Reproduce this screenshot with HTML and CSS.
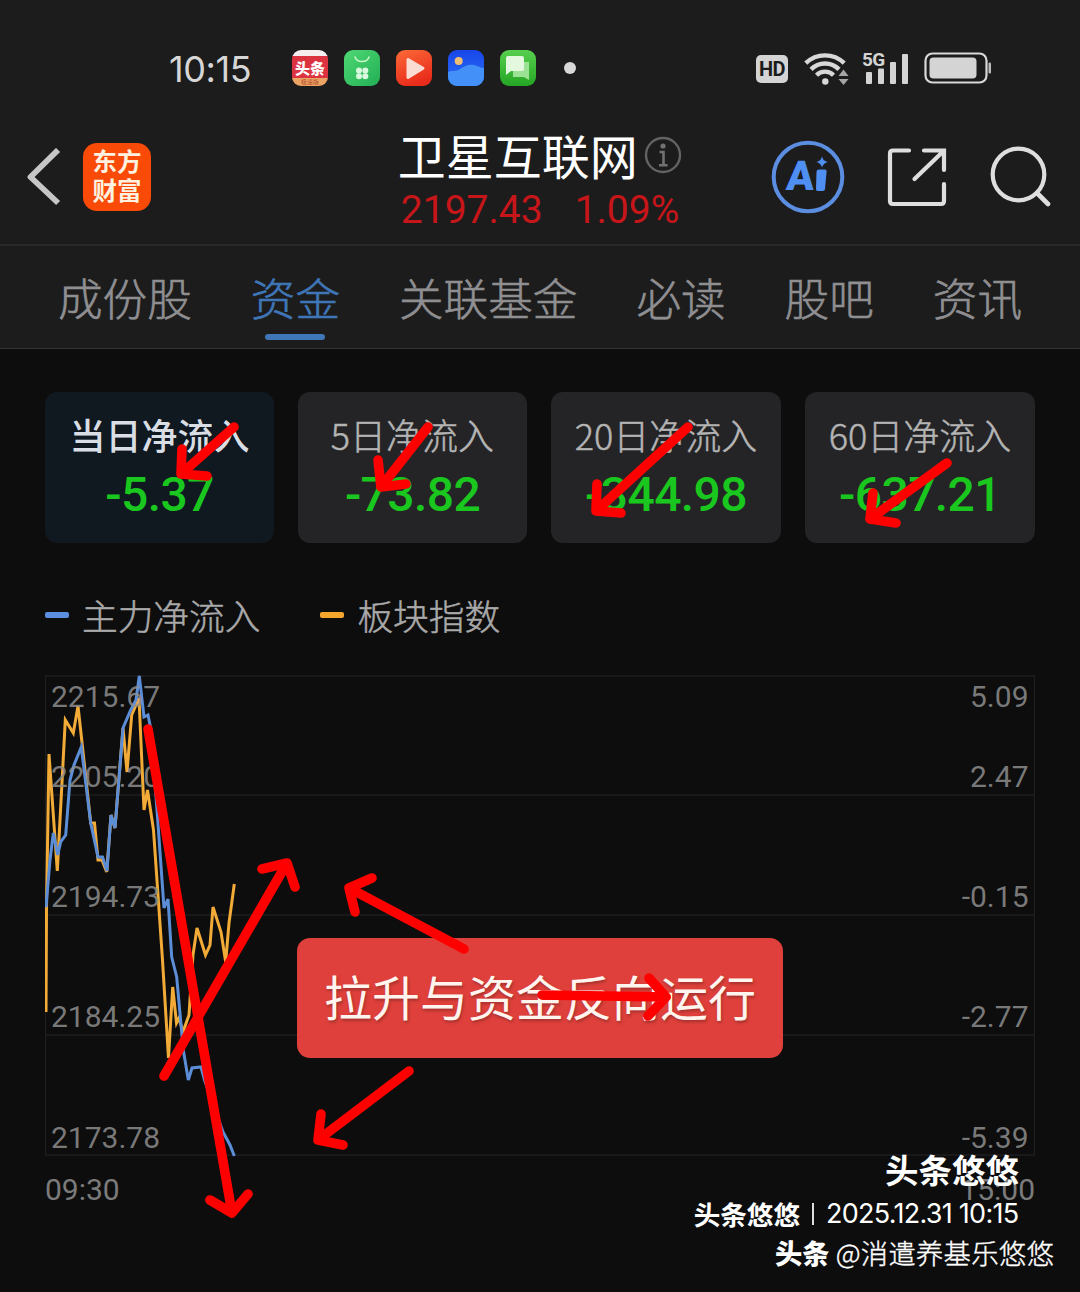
FILE: index.html
```html
<!DOCTYPE html>
<html lang="zh-CN">
<head>
<meta charset="utf-8">
<title>卫星互联网</title>
<link rel="stylesheet" href="styles.css">
</head>
<body>
<div class="screen">
  <div class="status">
    <span class="clock">10:15</span>
    <div class="apps">
      <div class="app news"><span class="news-name">头条</span><span class="news-tag">极速版</span></div>
      <svg class="app" viewBox="0 0 36 36"><defs><linearGradient id="g1" x2="1" y2="1"><stop stop-color="#4fd873"/><stop offset="1" stop-color="#22ae55"/></linearGradient></defs><rect width="36" height="36" rx="9" fill="url(#g1)"/><path d="M11 7a7.2 6 0 0 0 14 0" fill="none" stroke="#c9f8c9" stroke-width="1.5" stroke-linecap="round"/><g fill="#d9f9df"><circle cx="15" cy="20.5" r="3"/><circle cx="21.3" cy="20.5" r="3"/><circle cx="15" cy="26.3" r="3"/><circle cx="21.3" cy="26.3" r="3"/></g></svg>
      <svg class="app" viewBox="0 0 36 36"><defs><linearGradient id="g2" x2=".4" y2="1"><stop stop-color="#fb6a38"/><stop offset="1" stop-color="#e92c1b"/></linearGradient></defs><rect width="36" height="36" rx="9" fill="url(#g2)"/><path d="M12 9.500l15 8.700-15 9.300z" fill="#fbdcd3" stroke="#fbdcd3" stroke-width="3" stroke-linejoin="round"/></svg>
      <svg class="app" viewBox="0 0 36 36"><defs><linearGradient id="g3" x2="0" y2="1"><stop stop-color="#1846ea"/><stop offset="1" stop-color="#2d72f5"/></linearGradient></defs><rect width="36" height="36" rx="9" fill="url(#g3)"/><path d="M0 22c5-2 7 0 12-3s8-5 14-4c5 1 6 3 10 3v9a9 9 0 0 1-9 9H9a9 9 0 0 1-9-9z" fill="#4391f8"/><circle cx="10.700" cy="11" r="4" fill="#f0bd74"/></svg>
      <svg class="app" viewBox="0 0 36 36"><defs><linearGradient id="g4" x2="0" y2="1"><stop stop-color="#58cf4e"/><stop offset="1" stop-color="#25a524"/></linearGradient></defs><rect width="36" height="36" rx="9" fill="url(#g4)"/><path d="M13 12h16v18l-5-3H13z" fill="#9be294"/><path d="M8 6h14q2 0 2 2v11q0 2-2 2H11l-5 4V8q0-2 2-2z" fill="#e3f8df"/></svg>
    </div>
    <i class="dot"></i>
    <div class="signals">
      <span class="hd">HD</span>
      <svg class="wifi" width="46" height="36" viewBox="0 0 46 36"><g fill="none" stroke="#d8d8d8" stroke-width="4.400"><path d="M1.800 13.200a27.500 27.500 0 0 1 38.400 0"/><path d="M7 19.400a19.500 19.500 0 0 1 28 0"/><path d="M12.500 25.200a12 12 0 0 1 17 0"/></g><circle cx="21.300" cy="31.500" r="3.200" fill="#d8d8d8"/><path d="M34.500 26l5-6.500 5 6.500zM34.500 29h10l-5 6z" fill="#a5a5a5"/></svg>
      <div class="cell">
        <span class="five-g">5G</span>
        <svg width="48" height="36" viewBox="0 0 48 36"><g fill="#d4d4d4"><rect x="4" y="22" width="6" height="12" rx="1"/><rect x="16" y="18.500" width="6" height="15.500" rx="1"/><rect x="28" y="12" width="6" height="22" rx="1"/><rect x="40" y="4" width="6" height="30" rx="1"/></g></svg>
      </div>
      <svg class="battery" width="68" height="32" viewBox="0 0 68 32"><rect x="1.500" y="1.500" width="61" height="29" rx="7" fill="none" stroke="#d8d8d8" stroke-width="2.200"/><rect x="5.500" y="5.500" width="47" height="21" rx="4" fill="#d4d4d4"/><rect x="64.500" y="10.500" width="2.500" height="11" rx="1" fill="#bbb"/></svg>
    </div>
  </div>

  <header class="header">
    <svg class="back" width="34" height="58" viewBox="0 0 34 58"><path d="M29 4L3.500 29 29 53" fill="none" stroke="#c6c6c6" stroke-width="5.800" stroke-linecap="square" stroke-linejoin="round"/></svg>
    <div class="brand"><span>东方</span><span>财富</span></div>
    <div class="heading">
      <div class="title-row"><h1>卫星互联网</h1>
        <svg width="38" height="38" viewBox="0 0 38 38"><circle cx="19" cy="19" r="17" fill="none" stroke="#636363" stroke-width="2.400"/><circle cx="19" cy="10" r="2.600" fill="#717171"/><path d="M15.500 16h4v13M15 29.200h8.500" fill="none" stroke="#717171" stroke-width="2.600"/></svg>
      </div>
      <div class="quote"><span>2197.43</span><span>1.09%</span></div>
    </div>
    <div class="tools">
      <svg width="74" height="74" viewBox="0 0 74 74"><circle cx="37" cy="37" r="34.300" fill="none" stroke="#5b8ee0" stroke-width="4"/><text x="18" y="50.500" class="ai-mark" transform="skewX(-4)">A</text><path d="M45.500 31.500q.3-2 2.300-2h6q2 0 1.800 2L54 49q-.2 2-2.200 2h-5q-2 0-1.800-2zM51 16.500q1.200 4.500 5.800 5.500-4.600 1.200-5.800 5.500-1.200-4.300-5.500-5.500 4.300-1 5.500-5.500z" fill="#4f8ff2"/></svg>
      <svg width="60" height="60" viewBox="0 0 60 60"><path d="M22 3.500H6q-3 0-3 3V54q0 3 3 3h48q3 0 3-3V37M37 3.500h20V23M55 5.500L27.500 32" fill="none" stroke="#dedede" stroke-width="4.200" stroke-linecap="round"/></svg>
      <svg width="62" height="62" viewBox="0 0 62 62"><circle cx="29.500" cy="28.500" r="25.800" fill="none" stroke="#dedede" stroke-width="4.200"/><path d="M48 47l11 11" stroke="#dedede" stroke-width="4.600" stroke-linecap="round"/></svg>
    </div>
  </header>

  <nav class="tabs">
    <span>成份股</span><span class="on">资金</span><span>关联基金</span><span>必读</span><span>股吧</span><span>资讯</span>
  </nav>

  <main class="content">
    <section class="cards">
      <div class="card on"><span class="label">当日净流入</span><span class="value">-5.37</span></div>
      <div class="card"><span class="label">5日净流入</span><span class="value">-73.82</span></div>
      <div class="card"><span class="label">20日净流入</span><span class="value">-344.98</span></div>
      <div class="card"><span class="label">60日净流入</span><span class="value">-637.21</span></div>
    </section>
    <div class="legend">
      <span class="key"><i class="flow"></i>主力净流入</span>
      <span class="key"><i class="index"></i>板块指数</span>
    </div>
    <svg class="chart" width="990" height="484" viewBox="45 674 990 484">
      <path d="M45.500 676H1034.500V1155H45.500zM45 795H1035M45 915H1035M45 1035H1035" fill="none" stroke="#1e1e20" stroke-width="1.500"/>
      <path d="M46 1012L46.500 907 49 754 57.300 871 65.300 720 73.300 733 78 706 82.600 748 90.700 823 94.500 823 98 860 102 860 106.700 872 111 815 115 828 123 728 127 772 131.700 715 139 698 144 810 147.500 790 153.500 830 162.500 960 168.500 1058 172.700 987 176.500 1023 179 1018 183 1032 189 1015 193 955 197 928 205.500 955 210 945 213 907 221 932 225.700 962 229 923 234.300 884" fill="none" stroke="#f3ab38" stroke-width="3"/>
      <path d="M46 907L50 860 53.300 833 57.700 855 60.700 842 65.700 835 70 780 74 765 81.300 747 90.700 823 98 857 102.500 857 107 871 111 815 115 828 123 728 130.700 710 136 700 139.300 676 144 717 148 715 151 730 157 810 164 908 168 899 171.700 957 176.700 977 183.300 1050 188.300 1080 192 1068 201 1067 204.500 1080 223 1132 230 1145 234.300 1156" fill="none" stroke="#5c8ed8" stroke-width="3"/>
      <g class="axis">
        <text x="51" y="706.500">2215.67</text><text x="51" y="786.500">2205.20</text><text x="51" y="907">2194.73</text><text x="51" y="1027">2184.25</text><text x="51" y="1147.500">2173.78</text>
      </g>
      <g class="axis end">
        <text x="1028.500" y="706.500">5.09</text><text x="1028.500" y="786.500">2.47</text><text x="1028.500" y="907">-0.15</text><text x="1028.500" y="1027">-2.77</text><text x="1028.500" y="1147.500">-5.39</text>
      </g>
    </svg>
    <div class="times"><span>09:30</span><span>15:00</span></div>
  </main>

  <div class="note">拉升与资金反向运行</div>

  <svg class="arrows" width="1080" height="1292" viewBox="0 0 1080 1292">
    <path d="M234 427L181 474M182 449L181 474 207 476"/>
    <path d="M428 427L381 487M378 460L381 487 406 484"/>
    <path d="M688 427L596 511M597 484L596 511 621 513"/>
    <path d="M947 463L870 519M873 493L870 519 896 523"/>
    <path d="M148 729L232 1213M210 1200L232 1213 248 1194"/>
    <path d="M164 1076L287 863M262 869L287 863 295 887"/>
    <path d="M464 949L349 888M372 878L349 888 355 912"/>
    <path d="M409 1071L318 1140M321 1114L318 1140 343 1145"/>
    <path d="M542 995L666 997M649 978L666 997 648 1016"/>
  </svg>

  <div class="marks">
    <div class="mark-name">头条悠悠</div>
    <div class="mark-date"><b>头条悠悠</b><i></i><span>2025.12.31 10:15</span></div>
    <div class="mark-author"><b>头条</b><span>@消遣养基乐悠悠</span></div>
  </div>
</div>
</body>
</html>
```
FILE: styles.css
```css
* { box-sizing: border-box; }
body { margin: 0; background: #0d0d0d; font-family: "Noto Sans CJK SC", sans-serif; }
h1 { margin: 0; font-weight: 400; }
svg { display: block; flex: none; }
.screen { position: relative; width: 1080px; height: 1292px; overflow: hidden; background: #0d0d0d; }

.status { display: flex; align-items: center; height: 116px; padding: 20px 88px 0 169px; background: #1c1c1c; }
.clock { width: 123px; padding-top: 1px; color: #d6d6d6; font: 400 36px/36px Inter, sans-serif; letter-spacing: -.4px; white-space: nowrap; }
.apps { display: flex; gap: 16px; }
.app { width: 36px; height: 36px; }
.news { display: flex; flex-direction: column; align-items: center; justify-content: flex-end; border-radius: 9px; overflow: hidden; background: linear-gradient(#f6eeee 0 6px, #dc3340 6px 28px, #eba464 28px); color: #fff; }
.news-name { font-size: 15px; font-weight: 900; line-height: 20px; }
.news-tag { font-size: 6px; line-height: 8px; color: #b14a2c; }
.dot { width: 12px; height: 12px; margin-left: 28px; border-radius: 50%; background: #d8d8d8; }
.signals { display: flex; align-items: center; margin-left: auto; }
.hd { width: 32px; height: 28px; margin-top: 2px; border-radius: 5px; background: #d4d4d4; color: #1c1c1c; font: 700 20px/29px Roboto, sans-serif; text-align: center; letter-spacing: -.5px; }
.wifi { margin-left: 16px; }
.cell { position: relative; margin-left: 12px; }
.five-g { position: absolute; left: 0; top: -2px; color: #d4d4d4; font: 700 19px/24px Roboto, sans-serif; letter-spacing: -.7px; }
.battery { margin-left: 14px; }

.header { display: flex; align-items: center; height: 128px; padding: 0 29px 6px 27px; background: #1c1c1c; }
.brand { display: flex; flex-direction: column; align-items: center; width: 68px; height: 68px; margin-left: 22px; padding-top: 3px; border-radius: 14px; background: #f94a08; color: #fff1df; font-size: 24.500px; font-weight: 700; line-height: 29px; }
.heading { width: 374px; margin-left: 247px; padding-top: 7px; }
.title-row { display: flex; align-items: center; gap: 6px; height: 56px; }
.title-row h1 { margin-top: -3px; color: #fff; font-size: 48px; line-height: 56px; }
.quote { display: flex; gap: 32px; margin: 3px 0 0 3px; color: #c6161a; font: 39px/48px Roboto, sans-serif; }
.tools { display: flex; align-items: center; gap: 42px; }
.ai-mark { fill: #4f8ff2; font: 900 41px Roboto, sans-serif; }

.tabs { display: flex; gap: 59px; height: 105px; padding-left: 58px; border-top: 2px solid #29292a; border-bottom: 1px solid #333; background: #1c1c1c; color: #8f8f92; font-size: 44.600px; font-weight: 300; line-height: 102px; -webkit-text-stroke: .6px currentColor; }
.tabs .on { display: flex; flex-direction: column; align-items: center; color: #3f76b8; }
.tabs .on::after { content: ""; width: 60px; height: 6px; margin-top: -14px; border-radius: 3px; background: #3f76b8; }

.content { padding: 43px 45px 0; }
.cards { display: grid; grid-template-columns: 229px 229px 230px 230px; gap: 24px; }
.card { display: flex; flex-direction: column; align-items: center; height: 151px; padding-top: 17px; border-radius: 12px; background: #242426; color: #b4b4b4; }
.card .label { height: 52px; font-size: 36px; font-weight: 300; line-height: 50px; -webkit-text-stroke: .5px currentColor; }
.card .value { color: #1ac71f; font: 500 48px/68px Roboto, sans-serif; letter-spacing: -.6px; }
.card.on { background: #101820; color: #d9dee5; }
.card.on .label { font-weight: 500; -webkit-text-stroke: 0; }
.legend { display: flex; gap: 60px; height: 60px; margin-top: 42px; color: #a9a9aa; font-size: 35.700px; font-weight: 300; line-height: 60px; -webkit-text-stroke: .5px currentColor; }
.key { display: flex; align-items: center; gap: 13px; }
.key i { width: 24px; height: 6px; border-radius: 2px; }
.flow { background: #5c8ee0; }
.index { background: #f2a62c; }
.chart { margin-top: 29px; }
.axis { font: 30px Roboto, sans-serif; fill: #8e8e8e; fill-opacity: .85; }
.end { text-anchor: end; }
.times { display: flex; justify-content: space-between; color: #7b7b7b; font: 30px/40px Roboto, sans-serif; margin-top: 12px; }

.note { position: absolute; left: 297px; top: 938px; width: 486px; height: 120px; border-radius: 13px; background: #df403b; color: #fff5ee; font-size: 48px; line-height: 115px; text-align: center; text-shadow: 1px 2px 3px #6d242488; white-space: nowrap; }
.arrows { position: absolute; left: 0; top: 0; fill: none; stroke: #f00; stroke-width: 9.600; stroke-linecap: round; stroke-linejoin: round; }
.marks { position: absolute; right: 26px; top: 1148px; display: flex; flex-direction: column; align-items: flex-end; color: #fff; white-space: nowrap; }
.mark-name { margin-right: 35px; font-size: 33.500px; font-weight: 700; line-height: 42px; }
.mark-date { display: flex; align-items: center; height: 45px; margin-right: 35px; padding-top: 3px; font-size: 26.600px; line-height: 44px; }
.mark-date i { width: 2px; height: 22px; margin: 0 12px; background: #ddd; }
.mark-date span { width: 193px; font: 400 27px/44px Inter, sans-serif; letter-spacing: -.730px; }
.mark-author { display: flex; gap: 6px; margin-top: -1px; font-size: 27.300px; line-height: 36px; }
.mark-author b { font-weight: 900; }
.mark-author span { font-weight: 300; letter-spacing: .3px; -webkit-text-stroke: .4px currentColor; }
```
